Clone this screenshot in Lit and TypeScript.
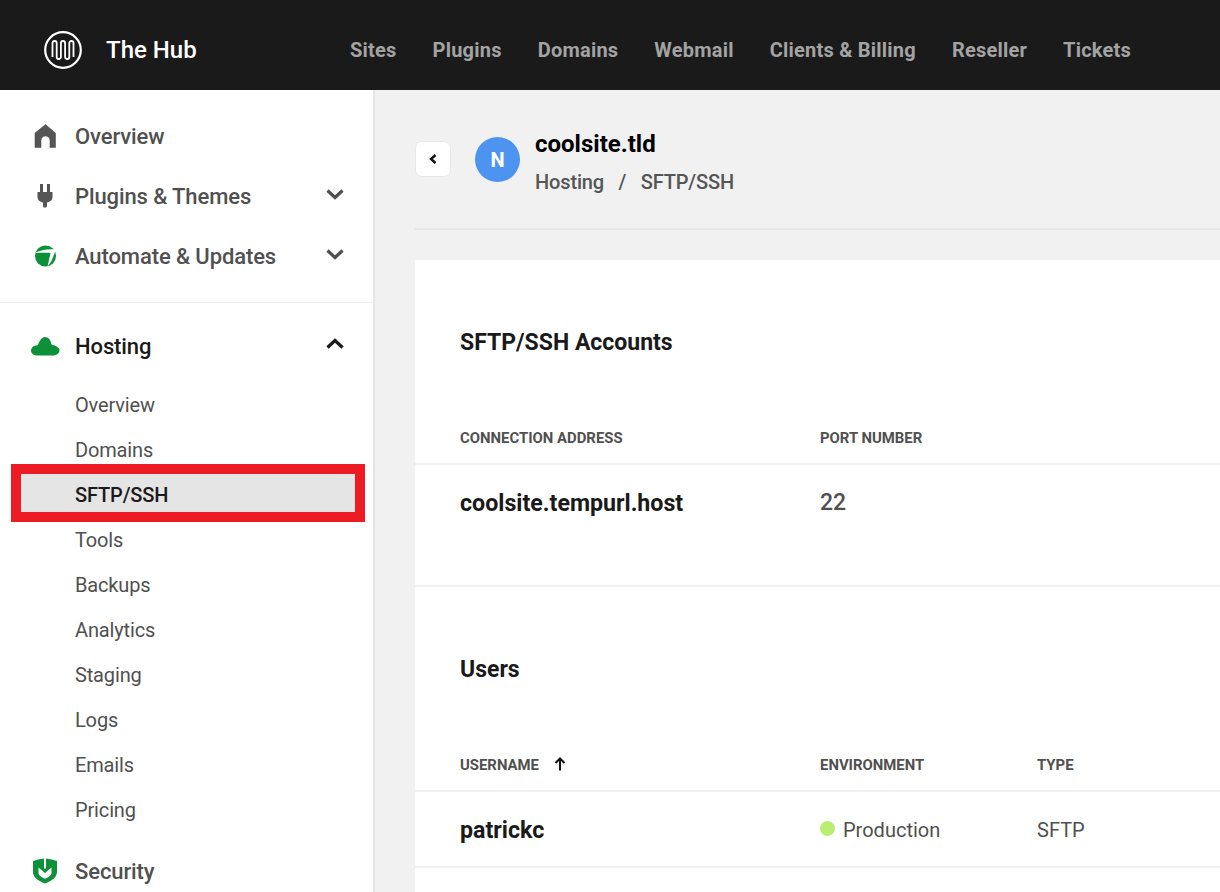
import { css, html, LitElement } from "lit";
import { customElement } from "lit/decorators.js";

const chevronDown = html`<svg class="chev" viewBox="0 0 18 12"><path d="M1.500 2.500l7.500 7 7.500-7" fill="none" stroke="currentColor" stroke-width="3.200"/></svg>`;
const chevronUp = html`<svg class="chev" viewBox="0 0 18 12"><path d="M1.500 9.500l7.500-7 7.500 7" fill="none" stroke="currentColor" stroke-width="3.200"/></svg>`;

const homeIcon = html`<svg class="icon" viewBox="0 0 30 30"><path d="M15.500 3.500L25.500 12V26.500H20V19.500a4.500 4.500 0 0 0-9 0V26.500H5V12z" fill="#555" stroke="#555" stroke-width=".6" stroke-linejoin="round"/></svg>`;
const plugIcon = html`<svg class="icon" viewBox="0 0 30 30"><path d="M10 3h3v8h4V3h3v8h2.500v5c0 3-2.500 5-5.500 5.500V25c0 .8-.7 1.500-1.500 1.500h-1c-.8 0-1.500-.7-1.500-1.500v-3.500C10 21 7.500 19 7.500 16v-5H10z" fill="#555"/></svg>`;
const automateIcon = html`<svg class="icon" viewBox="0 0 30 30"><circle cx="15.500" cy="15" r="10.500" fill="#0d9138"/><path d="M4.500 12C10 9.500 18 7.500 26 8.500L21.500 20 17.500 25.800 20.500 12C15 11.500 9 12 4.500 12z" fill="#fff"/></svg>`;
const cloudIcon = html`<svg class="cloud" viewBox="0 0 30 20"><path d="M7 19.500C3.500 19.500 1 17.300 1 14.500c0-2.600 2-4.700 5-5 .8-.1 1.500-.3 2-.8C9.500 5 11.500 1 15 1c3.300 0 5.500 2.800 6.300 6.500.2.800.5 1.200 1.400 1.500 3.600.6 6.800 2.800 6.800 5.500 0 2.800-3 5-6.500 5z" fill="#0d9138"/></svg>`;
const shieldIcon = html`<svg class="icon" viewBox="0 0 30 30"><path d="M3 5Q8 3 14 2.500V12L15 13 16 12V2.500Q22 3 27 5V16C27 21 22 25 15 27.500 8 25 3 21 3 16z" fill="#0d9138"/><path d="M8.500 11.500L15 17 21.500 11.500V17C21.500 19.500 18 21.500 15 22.800 12 21.500 8.500 19.500 8.500 17z" fill="#fff"/></svg>`;

@customElement("app-root")
export class AppRoot extends LitElement {
  render() {
    return html`
      <header class="topbar">
        <div class="brand">
          <svg class="logo" viewBox="0 0 38 38">
            <circle cx="19" cy="19" r="17.800" fill="none" stroke="#fff" stroke-width="2.200"/>
            <path d="M8.500 26V12.100a2.100 2.100 0 0 1 4.200 0V25.900a2.100 2.100 0 0 0 4.200 0V12.100a2.100 2.100 0 0 1 4.200 0V25.900a2.100 2.100 0 0 0 4.200 0V12.100a2.100 2.100 0 0 1 4.200 0V26" fill="none" stroke="#fff" stroke-width="1.800"/>
          </svg>
          <span class="brand-name">The Hub</span>
        </div>
        <nav class="topnav">
          ${["Sites", "Plugins", "Domains", "Webmail", "Clients & Billing", "Reseller", "Tickets"].map(
            (t) => html`<a>${t}</a>`
          )}
        </nav>
      </header>
      <div class="body">
        <aside class="sidebar">
          <div class="group first">
            <div class="item"><span class="slot">${homeIcon}</span><span class="label">Overview</span></div>
            <div class="item"><span class="slot">${plugIcon}</span><span class="label">Plugins &amp; Themes</span>${chevronDown}</div>
            <div class="item"><span class="slot">${automateIcon}</span><span class="label">Automate &amp; Updates</span>${chevronDown}</div>
          </div>
          <div class="group second">
            <div class="item active"><span class="slot">${cloudIcon}</span><span class="label">Hosting</span>${chevronUp}</div>
            <div class="subs">
              <div class="sub">Overview</div>
              <div class="sub">Domains</div>
              <div class="sub current">SFTP/SSH<span class="mark"></span></div>
              <div class="sub">Tools</div>
              <div class="sub">Backups</div>
              <div class="sub">Analytics</div>
              <div class="sub">Staging</div>
              <div class="sub">Logs</div>
              <div class="sub">Emails</div>
              <div class="sub">Pricing</div>
            </div>
            <div class="item security"><span class="slot">${shieldIcon}</span><span class="label">Security</span></div>
          </div>
        </aside>
        <main class="main">
          <div class="site-head">
            <button class="back">
              <svg viewBox="0 0 10 12" width="10" height="12"><path d="M7.500 2L3 6l4.500 4" fill="none" stroke="#111" stroke-width="2.400"/></svg>
            </button>
            <div class="avatar">N</div>
            <div class="site-text">
              <div class="site-name">coolsite.tld</div>
              <div class="crumbs"><span>Hosting</span><span class="sep">/</span><span>SFTP/SSH</span></div>
            </div>
          </div>
          <section class="card">
            <h2 class="accounts">SFTP/SSH Accounts</h2>
            <div class="row head">
              <span class="col-a">Connection Address</span>
              <span class="col-b">Port Number</span>
            </div>
            <div class="row conn">
              <span class="col-a strong">coolsite.tempurl.host</span>
              <span class="col-b port">22</span>
            </div>
            <h2 class="users">Users</h2>
            <div class="row head">
              <span class="col-a">Username
                <svg class="sort" viewBox="0 0 14 16" width="14" height="16"><path d="M7 14.500V2.500M2.500 7L7 2.500 11.500 7" fill="none" stroke="#111" stroke-width="2"/></svg>
              </span>
              <span class="col-b">Environment</span>
              <span class="col-c">Type</span>
            </div>
            <div class="row user">
              <span class="col-a strong">patrickc</span>
              <span class="col-b env"><i class="dot"></i>Production</span>
              <span class="col-c plain">SFTP</span>
            </div>
          </section>
        </main>
      </div>
    `;
  }

  static styles = css`
    :host {
      display: block;
      height: 892px;
      overflow: hidden;
      font-family: Roboto, "Liberation Sans", sans-serif;
      background: #f1f1f1;
      color: #1a1a1a;
    }
    .topbar {
      height: 90px;
      box-sizing: border-box;
      padding-top: 10px;
      background: #1a1a1a;
      display: flex;
      align-items: center;
    }
    .brand {
      width: 350px;
      padding-left: 44px;
      box-sizing: border-box;
      display: flex;
      align-items: center;
      gap: 24px;
    }
    .logo {
      width: 38px;
      height: 38px;
      margin-top: -1px;
      flex: none;
    }
    .brand-name {
      color: #fff;
      font-size: 24px;
      font-weight: 500;
    }
    .topnav {
      display: flex;
      gap: 36px;
    }
    .topnav a {
      color: #a3a3a3;
      font-size: 20px;
      font-weight: 700;
      letter-spacing: 0.22px;
    }
    .body {
      display: flex;
      height: 802px;
    }
    .sidebar {
      width: 375px;
      flex: none;
      box-sizing: border-box;
      background: #fff;
      border-right: 2px solid #e6e6e6;
    }
    .group.first {
      padding: 16px 0 16px;
      border-bottom: 1px solid #eee;
    }
    .group.second {
      padding-top: 13px;
    }
    .item {
      height: 60px;
      display: flex;
      align-items: center;
      color: #505050;
      font-size: 22px;
      font-weight: 500;
      letter-spacing: -0.1px;
      padding-right: 29px;
    }
    .item.active {
      color: #1a1a1a;
    }
    .item.security {
      margin-top: 8px;
    }
    .slot {
      width: 75px;
      flex: none;
      display: flex;
      justify-content: center;
      padding-left: 15px;
      box-sizing: border-box;
    }
    .icon {
      width: 30px;
      height: 30px;
      display: block;
    }
    .cloud {
      width: 30px;
      height: 20px;
      display: block;
    }
    .label {
      flex: 1;
    }
    .chev {
      width: 18px;
      height: 12px;
      margin-top: -5px;
      flex: none;
    }
    .subs {
      padding-top: 7px;
      position: relative;
      z-index: 0;
    }
    .sub {
      height: 45px;
      line-height: 45px;
      padding-left: 75px;
      font-size: 20px;
      letter-spacing: -0.15px;
      color: #505050;
      position: relative;
    }
    .sub.current {
      color: #1a1a1a;
      font-weight: 500;
    }
    .mark {
      position: absolute;
      left: 11px;
      top: -9px;
      width: 354px;
      height: 58px;
      box-sizing: border-box;
      border: 10px solid #ed1c24;
      background: #e5e5e5;
      z-index: -1;
    }
    .main {
      flex: 1;
      min-width: 0;
      padding: 0 0 0 40px;
    }
    .site-head {
      height: 140px;
      box-sizing: border-box;
      padding-top: 40px;
      border-bottom: 2px solid #e6e6e6;
      display: flex;
      align-items: flex-start;
    }
    .back {
      width: 36px;
      height: 36px;
      margin-top: 11px;
      padding: 0;
      background: #fff;
      border: 1px solid #e8e8e8;
      border-radius: 7px;
      display: flex;
      align-items: center;
      justify-content: center;
      flex: none;
    }
    .avatar {
      width: 45px;
      height: 45px;
      margin: 7px 15px 0 24px;
      border-radius: 50%;
      background: #4d94f0;
      color: #fff;
      font-size: 20px;
      font-weight: 700;
      display: flex;
      align-items: center;
      justify-content: center;
      flex: none;
    }
    .site-name {
      font-size: 24px;
      font-weight: 700;
      line-height: 28px;
      color: #000;
    }
    .crumbs {
      margin-top: 12px;
      font-size: 20px;
      font-weight: 500;
      letter-spacing: -0.15px;
      line-height: 24px;
      color: #555;
      display: flex;
      gap: 14.500px;
    }
    .card {
      background: #fff;
      margin-top: 30px;
      height: 660px;
    }
    h2 {
      margin: 0;
      padding-left: 45px;
      font-size: 23px;
      font-weight: 700;
      line-height: 28px;
      color: #1a1a1a;
    }
    .accounts {
      padding-top: 69px;
    }
    .users {
      padding-top: 69px;
    }
    .row {
      display: flex;
      padding-left: 45px;
      border-bottom: 2px solid #f1f1f1;
      box-sizing: border-box;
    }
    .accounts + .row,
    .users + .row {
      margin-top: 73px;
    }
    .head {
      height: 35px;
      font-size: 14.900px;
      font-weight: 700;
      line-height: 16px;
      text-transform: uppercase;
      color: #505050;
    }
    .col-a {
      width: 360px;
      flex: none;
      display: flex;
      gap: 14px;
      align-items: flex-start;
    }
    .col-b {
      width: 217px;
      flex: none;
    }
    .sort {
      margin-top: -1px;
    }
    .conn {
      height: 122px;
      padding-top: 24px;
      align-items: flex-start;
    }
    .strong {
      font-size: 23.200px;
      font-weight: 700;
      line-height: 28px;
      color: #1a1a1a;
    }
    .port {
      font-size: 23px;
      font-weight: 500;
      line-height: 28px;
      color: #505050;
    }
    .user {
      height: 76px;
      padding-top: 24px;
      align-items: flex-start;
    }
    .env,
    .plain {
      font-size: 20px;
      line-height: 28px;
      color: #505050;
    }
    .env {
      display: flex;
      align-items: center;
    }
    .dot {
      width: 15px;
      height: 15px;
      border-radius: 50%;
      background: #b9ee75;
      margin: -3px 8px 0 0;
    }
  `;
}
